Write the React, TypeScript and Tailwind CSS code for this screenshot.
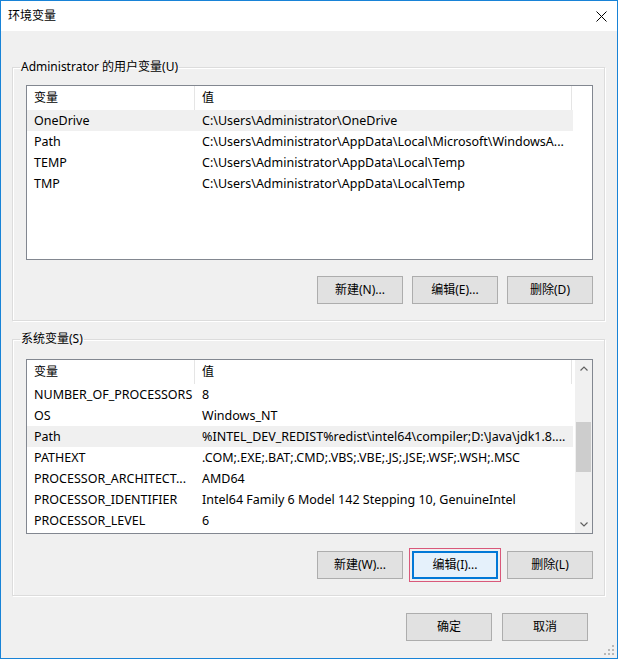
import React from 'react'

// ============================================================================
// DATA
// ============================================================================

type Row = { name: string; value: string; selected?: boolean }

const userVars: Row[] = [
  { name: 'OneDrive', value: 'C:\\Users\\Administrator\\OneDrive', selected: true },
  { name: 'Path', value: 'C:\\Users\\Administrator\\AppData\\Local\\Microsoft\\WindowsA...' },
  { name: 'TEMP', value: 'C:\\Users\\Administrator\\AppData\\Local\\Temp' },
  { name: 'TMP', value: 'C:\\Users\\Administrator\\AppData\\Local\\Temp' }
]

const systemVars: Row[] = [
  { name: 'NUMBER_OF_PROCESSORS', value: '8' },
  { name: 'OS', value: 'Windows_NT' },
  { name: 'Path', value: '%INTEL_DEV_REDIST%redist\\intel64\\compiler;D:\\Java\\jdk1.8....', selected: true },
  { name: 'PATHEXT', value: '.COM;.EXE;.BAT;.CMD;.VBS;.VBE;.JS;.JSE;.WSF;.WSH;.MSC' },
  { name: 'PROCESSOR_ARCHITECT...', value: 'AMD64' },
  { name: 'PROCESSOR_IDENTIFIER', value: 'Intel64 Family 6 Model 142 Stepping 10, GenuineIntel' },
  { name: 'PROCESSOR_LEVEL', value: '6' }
]

const font = { fontFamily: '"Noto Sans", "Noto Sans CJK SC", sans-serif' }

// ============================================================================
// PIECES
// ============================================================================

function Button({ label, focused }: { label: string; focused?: boolean }) {
  if (focused) {
    return (
      <div className="w-[86px] h-[28px] relative">
        <div className="absolute -inset-[3px] border border-[#d9587a]" />
        <button className="w-full h-full bg-[#e5f1fb] border-2 border-[#0078d7] text-[12px] text-black leading-none">
          {label}
        </button>
      </div>
    )
  }
  return (
    <button className="w-[86px] h-[28px] bg-[#e1e1e1] border border-[#adadad] text-[12px] text-black leading-none">
      {label}
    </button>
  )
}

function ListView({ rows, scrollbar }: { rows: Row[]; scrollbar?: boolean }) {
  return (
    <div className="h-[175px] border border-[#828790] bg-white flex overflow-hidden">
      <div className="flex-1 min-w-0">
        {/* Header */}
        <div className="h-[24px] flex text-[12px] text-black">
          <div className="w-[168px] pl-[7px] flex items-center border-r border-[#e5e5e5]">变量</div>
          <div className="w-[377px] pl-[7px] flex items-center border-r border-[#e5e5e5]">值</div>
        </div>
        {rows.map((r) => (
          <div
            key={r.name}
            className={`h-[21px] w-[546px] pt-[2px] flex items-center text-[12.5px] text-black whitespace-nowrap ${r.selected ? 'bg-[#f0f0f0]' : ''}`}
          >
            <div className="w-[168px] pl-[7px] overflow-hidden">{r.name}</div>
            <div className="w-[378px] pl-[7px] overflow-hidden">{r.value}</div>
          </div>
        ))}
      </div>
      {scrollbar && (
        <div className="w-[17px] bg-[#f0f0f0] flex flex-col items-center">
          <div className="h-[17px] w-full flex items-center justify-center">
            <svg width="8" height="5" viewBox="0 0 8 5">
              <polyline points="0.5,4.5 4,1 7.5,4.5" fill="none" stroke="#606060" strokeWidth="1.2" />
            </svg>
          </div>
          <div className="h-[45px]" />
          <div className="h-[50px] w-[15px] bg-[#cdcdcd]" />
          <div className="flex-1" />
          <div className="h-[17px] w-full flex items-center justify-center">
            <svg width="8" height="5" viewBox="0 0 8 5">
              <polyline points="0.5,0.5 4,4 7.5,0.5" fill="none" stroke="#606060" strokeWidth="1.2" />
            </svg>
          </div>
        </div>
      )}
    </div>
  )
}

function Group({
  title,
  children,
  className
}: {
  title: string
  children: React.ReactNode
  className?: string
}) {
  return (
    <fieldset
      className={`border border-[#dcdcdc] shadow-[inset_1px_1px_0_#ffffff,1px_1px_0_#ffffff] ${className || ''}`}
    >
      <legend className="ml-[7px] px-[1px] text-[12px] leading-[16px] text-black">{title}</legend>
      {children}
    </fieldset>
  )
}

// ============================================================================
// APP
// ============================================================================

export default function App() {
  return (
    <div style={font} className="w-[618px] h-[659px] border border-[#1883d7] bg-[#f0f0f0] flex flex-col relative">
      {/* Title bar */}
      <div className="h-[30px] bg-white flex items-center justify-between pl-[7px] pr-[10px] shrink-0">
        <span className="text-[12px] text-black">环境变量</span>
        <svg width="11" height="11" viewBox="0 0 11 11">
          <path d="M0.5 0.5 L10.5 10.5 M10.5 0.5 L0.5 10.5" stroke="#000" strokeWidth="1" />
        </svg>
      </div>

      {/* Body */}
      <div className="flex-1 pl-[11px] pr-[12px] pt-[28px]">
        <Group title="Administrator 的用户变量(U)">
          <div className="pl-[13px] pr-[11px] pt-[10px] pb-[16px]">
            <ListView rows={userVars} />
            <div className="mt-[16px] flex justify-end gap-[9px]">
              <Button label="新建(N)..." />
              <Button label="编辑(E)..." />
              <Button label="删除(D)" />
            </div>
          </div>
        </Group>

        <Group title="系统变量(S)" className="mt-[10px]">
          <div className="pl-[13px] pr-[11px] pt-[12px] pb-[16px]">
            <ListView rows={systemVars} scrollbar />
            <div className="mt-[17px] flex justify-end gap-[9px]">
              <Button label="新建(W)..." />
              <Button label="编辑(I)..." focused />
              <Button label="删除(L)" />
            </div>
          </div>
        </Group>

        <div className="mt-[17px] flex justify-end gap-[10px] pr-[17px]">
          <Button label="确定" />
          <Button label="取消" />
        </div>
      </div>

      {/* Size grip */}
      <svg className="absolute right-[3px] bottom-[3px]" width="10" height="10" viewBox="0 0 10 10">
        <rect x="8" y="0" width="2" height="2" fill="#b8b8b8" />
        <rect x="4" y="4" width="2" height="2" fill="#b8b8b8" />
        <rect x="8" y="4" width="2" height="2" fill="#b8b8b8" />
        <rect x="0" y="8" width="2" height="2" fill="#b8b8b8" />
        <rect x="4" y="8" width="2" height="2" fill="#b8b8b8" />
        <rect x="8" y="8" width="2" height="2" fill="#b8b8b8" />
      </svg>
    </div>
  )
}
